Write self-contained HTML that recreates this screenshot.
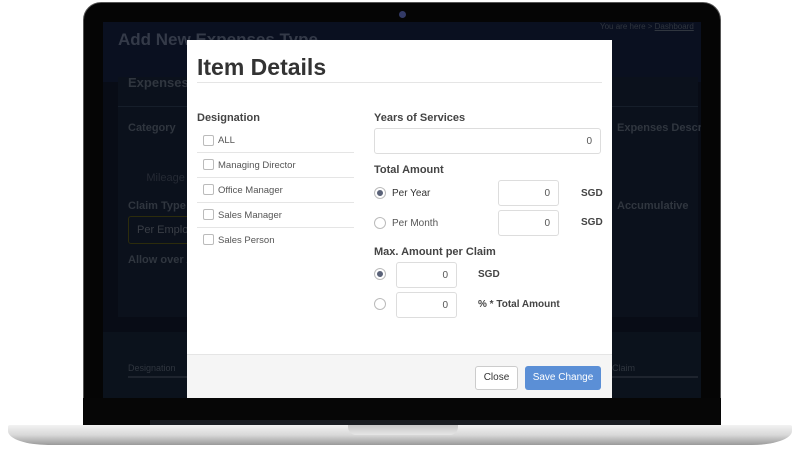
<!DOCTYPE html>
<html><head><meta charset="utf-8"><style>
*{margin:0;padding:0;box-sizing:border-box}
body{width:800px;height:453px;background:#fff;position:relative;overflow:hidden;font-family:"Liberation Sans",Arial,sans-serif}
.a{position:absolute;white-space:nowrap}
.lid{left:83px;top:2px;width:638px;height:423px;background:#050505;border-radius:18px 18px 0 0;border:1px solid #555}
.scr{left:103px;top:22px;width:598px;height:376px;background:#080c16;overflow:hidden}
.d{color:#30363f;font-weight:bold;font-size:11px}
.base{left:8px;top:425px;width:784px;height:20px;background:linear-gradient(#f2f2f2,#d8d8d8 50%,#9a9a9a);border-radius:2px 2px 40px 40px/2px 2px 14px 14px}
.notch{left:348px;top:425px;width:110px;height:10px;background:linear-gradient(#c8c8c8,#e6e6e6);border-radius:0 0 8px 8px}
.modal{left:187px;top:40px;width:425px;height:358px;background:#fff}
.lbl{font-size:11px;font-weight:bold;color:#444}
.cb{width:11px;height:11px;border:1px solid #bbb;border-radius:2px;background:#fff}
.row{font-size:9.5px;color:#555}
.hr{height:1px;background:#e5e5e5}
.inp{border:1px solid #ddd;border-radius:3px;background:#fff;font-size:10px;color:#555;text-align:right;padding-right:8px}
.rad{width:12px;height:12px;border:1px solid #bbb;border-radius:50%;background:#fff}
.rad.on::after{content:"";position:absolute;left:2px;top:2px;width:6px;height:6px;border-radius:50%;background:#5a6278}
</style></head><body>
<div class="a lid"></div>
<div class="a" style="left:399px;top:11px;width:7px;height:7px;border-radius:50%;background:#333a66"></div>
<div class="a scr">
 <div class="a" style="left:0;top:0;width:598px;height:60px;background:#0a1020"></div>
 <div class="a" style="left:15px;top:8px;font-size:17px;font-weight:bold;color:#343a48">Add New Expenses Type</div>
 <div class="a" style="left:497px;top:0px;font-size:8px;color:#30363f">You are here &gt; <u>Dashboard</u></div>
 <div class="a" style="left:15px;top:55px;width:580px;height:240px;background:#0b111c"></div>
 <div class="a" style="left:15px;top:84px;width:580px;height:1px;background:#161e2a"></div>
 <div class="a d" style="left:25px;top:53px;font-size:13px">Expenses</div>
 <div class="a d" style="left:25px;top:100px">Category</div>
 <div class="a d" style="left:25px;top:178px">Claim Type</div>
 <div class="a" style="left:25px;top:194px;width:70px;height:28px;border:1px solid #2c2c0c;border-radius:3px;color:#3a3e46;font-size:11px;padding:7px 8px;overflow:hidden">Per Employ</div>
 <div class="a d" style="left:25px;top:232px">Allow over An</div>
 <div class="a d" style="left:25px;top:150px;font-weight:normal;color:#252a34">&nbsp;&nbsp;&nbsp;&nbsp;&nbsp;&nbsp;Mileage</div>
 <div class="a d" style="left:514px;top:100px">Expenses Descripti</div>
 <div class="a d" style="left:514px;top:178px">Accumulative</div>
 <div class="a" style="left:0;top:310px;width:598px;height:70px;background:#0b121c"></div>
 <div class="a d" style="left:25px;top:341px;font-weight:normal;font-size:9px">Designation</div>
 <div class="a" style="left:25px;top:354px;width:70px;height:2px;background:#1e242e"></div>
 <div class="a d" style="left:509px;top:341px;font-weight:normal;font-size:9px">Claim</div>
 <div class="a" style="left:509px;top:354px;width:86px;height:2px;background:#1e242e"></div>
</div>
<div class="a modal">
 <div class="a" style="left:10px;top:14px;font-size:23px;font-weight:bold;color:#333">Item Details</div>
 <div class="a hr" style="left:10px;top:42px;width:405px"></div>
 <div class="a lbl" style="left:10px;top:72px">Designation</div>
 <div class="a cb" style="left:16px;top:95px"></div><div class="a row" style="left:31px;top:95px">ALL</div>
 <div class="a hr" style="left:10px;top:112px;width:157px"></div>
 <div class="a cb" style="left:16px;top:119px"></div><div class="a row" style="left:31px;top:120px">Managing Director</div>
 <div class="a hr" style="left:10px;top:137px;width:157px"></div>
 <div class="a cb" style="left:16px;top:144px"></div><div class="a row" style="left:31px;top:145px">Office Manager</div>
 <div class="a hr" style="left:10px;top:162px;width:157px"></div>
 <div class="a cb" style="left:16px;top:169px"></div><div class="a row" style="left:31px;top:170px">Sales Manager</div>
 <div class="a hr" style="left:10px;top:187px;width:157px"></div>
 <div class="a cb" style="left:16px;top:194px"></div><div class="a row" style="left:31px;top:195px">Sales Person</div>

 <div class="a lbl" style="left:187px;top:72px">Years of Services</div>
 <div class="a inp" style="left:187px;top:88px;width:227px;height:26px;padding-top:7px">0</div>
 <div class="a lbl" style="left:187px;top:124px">Total Amount</div>
 <div class="a rad on" style="left:187px;top:147px"></div><div class="a row" style="left:205px;top:148px;color:#333;font-size:10px">Per Year</div>
 <div class="a inp" style="left:311px;top:140px;width:61px;height:26px;padding-top:7px">0</div>
 <div class="a lbl" style="left:394px;top:148px;font-size:10px">SGD</div>
 <div class="a rad" style="left:187px;top:177px"></div><div class="a row" style="left:205px;top:178px;font-size:10px">Per Month</div>
 <div class="a inp" style="left:311px;top:170px;width:61px;height:26px;padding-top:7px">0</div>
 <div class="a lbl" style="left:394px;top:177px;font-size:10px">SGD</div>
 <div class="a lbl" style="left:187px;top:206px">Max. Amount per Claim</div>
 <div class="a rad on" style="left:187px;top:228px"></div>
 <div class="a inp" style="left:209px;top:222px;width:61px;height:26px;padding-top:7px">0</div>
 <div class="a lbl" style="left:291px;top:229px;font-size:10px">SGD</div>
 <div class="a rad" style="left:187px;top:258px"></div>
 <div class="a inp" style="left:209px;top:252px;width:61px;height:26px;padding-top:7px">0</div>
 <div class="a lbl" style="left:291px;top:259px;font-size:10px">% * Total Amount</div>

 <div class="a" style="left:0;top:314px;width:425px;height:44px;background:#f5f5f5;border-top:1px solid #e5e5e5"></div>
 <div class="a" style="left:288px;top:326px;width:43px;height:24px;border:1px solid #ccc;border-radius:3px;background:#fff;font-size:10px;color:#333;text-align:center;line-height:22px">Close</div>
 <div class="a" style="left:338px;top:326px;width:76px;height:24px;border-radius:3px;background:#5b8fd6;font-size:10px;color:#fff;text-align:center;line-height:24px">Save Change</div>
</div>
<div class="a" style="left:83px;top:398px;width:638px;height:27px;background:#060606"></div>
<div class="a" style="left:150px;top:420px;width:500px;height:5px;background:#1a1d22"></div>
<div class="a base"></div>
<div class="a notch"></div>
</body></html>
